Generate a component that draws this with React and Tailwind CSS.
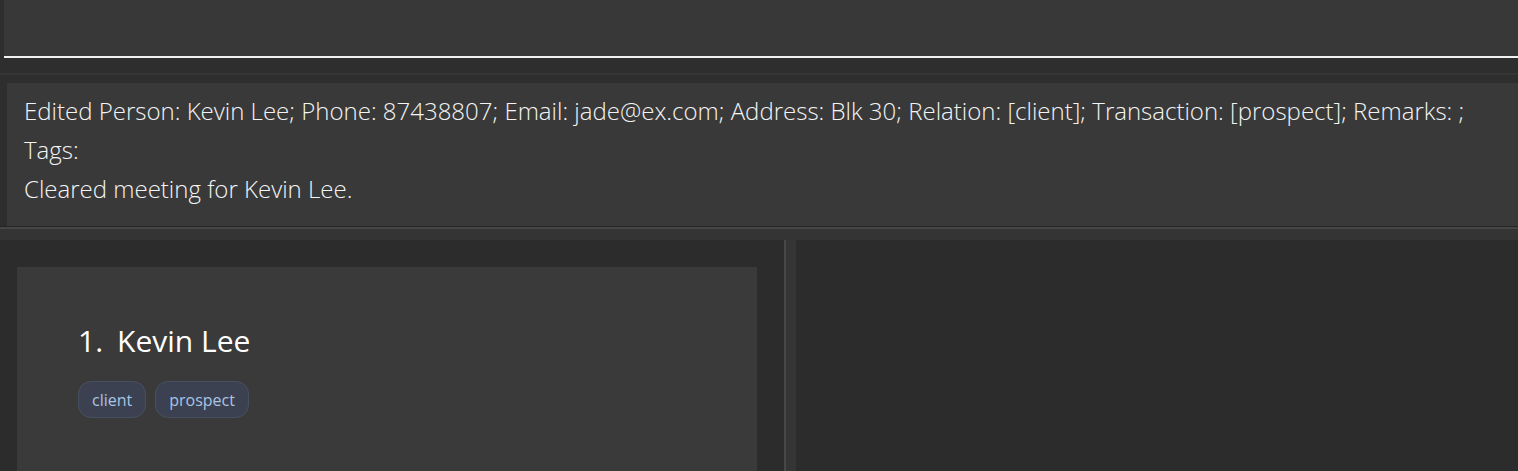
const tags = ["client", "prospect"];

const App = () => {
  return (
    <div
      className="w-[1518px] h-[471px] overflow-hidden flex flex-col bg-[#2e2e2e] text-white"
      style={{ fontFamily: '"Open Sans", "Noto Sans", sans-serif' }}
    >
      {/* Command box */}
      <div className="h-[58px] pl-[4px] shrink-0">
        <div className="h-full bg-[#383838] border-b-2 border-[#f2f2f2]" />
      </div>

      {/* Splitter */}
      <div className="h-[25px] shrink-0 flex flex-col">
        <div className="h-[15px]" />
        <div className="h-[2px] bg-[#353535]" />
      </div>

      {/* Result display */}
      <div className="h-[143px] shrink-0 pl-[7px]">
        <div className="h-full bg-[#393939] pl-[17px] pt-[8px] text-[24px] font-light leading-[39px] text-[#f4f4f4]">
          <p>
            Edited Person: Kevin Lee; Phone: 87438807; Email: jade@ex.com; Address: Blk 30; Relation: [client]; Transaction: [prospect]; Remarks: ;
          </p>
          <p>Tags:</p>
          <p>Cleared meeting for Kevin Lee.</p>
        </div>
      </div>

      {/* Divider */}
      <div className="h-[1px] shrink-0 bg-[#262626]" />
      <div className="h-[2px] shrink-0 bg-[#454545]" />
      <div className="h-[11px] shrink-0 bg-[#343434]" />

      {/* Lower panels */}
      <div className="flex-1 flex min-h-0">
        <div className="w-[784px] bg-[#2c2c2c] pl-[17px] pt-[27px] pr-[27px]">
          <div className="h-[300px] bg-[#3a3a3a] pl-[61px] pt-[55px]">
            <div className="text-[30px] leading-[38px] text-white">
              <span>1.</span>
              <span className="ml-[14px]">Kevin Lee</span>
            </div>
            <div className="mt-[21px] flex gap-[9px]">
              {tags.map((t) => (
                <span
                  key={t}
                  className="h-[37px] px-[13px] flex items-center rounded-[13px] bg-[#3b4150] border border-[#48505f] text-[16px] text-[#a9c4e4]"
                >
                  {t}
                </span>
              ))}
            </div>
          </div>
        </div>
        <div className="w-[2px] bg-[#474747]" />
        <div className="w-[10px] bg-[#353535]" />
        <div className="flex-1 bg-[#2c2c2c]" />
      </div>
    </div>
  );
};

export default App;
